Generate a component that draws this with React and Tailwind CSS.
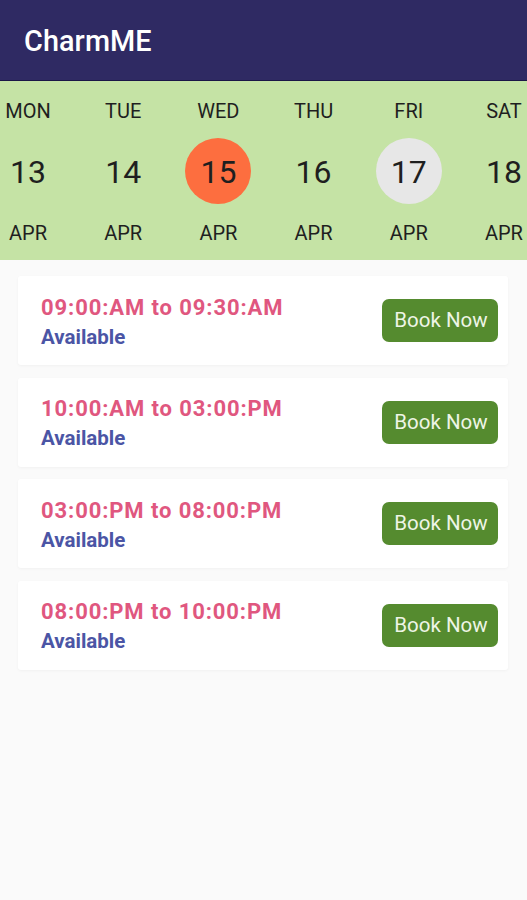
import React from "react";

const days = [
  { d: "MON", n: "13" },
  { d: "TUE", n: "14" },
  { d: "WED", n: "15", sel: "orange" },
  { d: "THU", n: "16" },
  { d: "FRI", n: "17", sel: "gray" },
  { d: "SAT", n: "18" },
];

const slots = [
  "09:00:AM to 09:30:AM",
  "10:00:AM to 03:00:PM",
  "03:00:PM to 08:00:PM",
  "08:00:PM to 10:00:PM",
];

export default function App() {
  return (
    <div
      className="w-[527px] h-[900px] bg-[#fafafa] overflow-hidden"
      style={{ fontFamily: "Roboto, 'Noto Sans', sans-serif" }}
    >
      <div className="h-[81px] bg-[#2f2a63] border-b border-[#1b1747] flex items-center pl-[24px] pt-[2px]">
        <span className="text-white text-[28.8px] font-medium leading-none tracking-[0.1px]">CharmME</span>
      </div>
      <div className="h-[179px] bg-[#c5e3a5] overflow-hidden">
        <div className="flex ml-[-19.6px] pt-[18px]">
          {days.map((x) => (
            <div key={x.d} className="w-[95.2px] shrink-0 flex flex-col items-center text-[#1f1f1f]">
              <div className="text-[20px] leading-[24px] h-[24px]">{x.d}</div>
              <div
                className={
                  "mt-[15px] w-[66px] h-[66px] rounded-full flex items-center justify-center text-[32px] pt-[2px] " +
                  (x.sel === "orange"
                    ? "bg-[#fd6e3f]"
                    : x.sel === "gray"
                    ? "bg-[#e7e7e7]"
                    : "")
                }
              >
                {x.n}
              </div>
              <div className="mt-[17px] text-[20px] leading-[24px] h-[24px]">APR</div>
            </div>
          ))}
        </div>
      </div>
      <div className="flex flex-col gap-[12.5px] pt-[16px] pl-[18px] pr-[19px]">
        {slots.map((s) => (
          <div
            key={s}
            className="h-[89px] bg-white rounded-[3px] shadow-[0_1px_3px_rgba(0,0,0,0.04)] flex items-center justify-between pl-[23px] pr-[10px]"
          >
            <div className="flex flex-col pt-[3px]">
              <div className="text-[#e0577f] font-bold text-[22px] leading-[26px] tracking-[0.9px]">{s}</div>
              <div className="text-[#4b55a5] font-bold text-[20.5px] leading-[26px] mt-[3px]">Available</div>
            </div>
            <div className="w-[116px] h-[43px] rounded-[7px] bg-[#558b2f] flex items-center justify-center text-[#eef5e6] text-[20.5px] pl-[2px]">
              Book Now
            </div>
          </div>
        ))}
      </div>
    </div>
  );
}
